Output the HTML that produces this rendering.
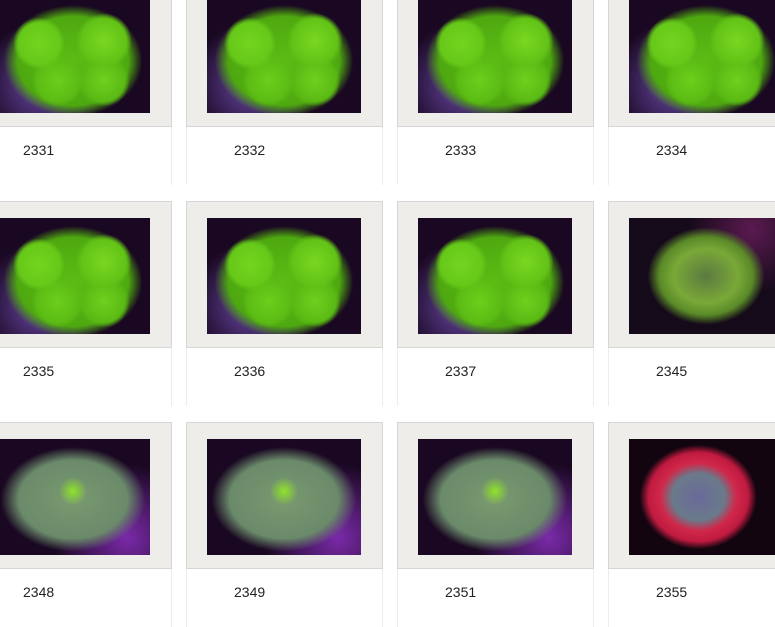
<!DOCTYPE html>
<html><head><style>
body{margin:0;width:775px;height:625px;overflow:hidden;background:#fff;position:relative;font-family:"Liberation Sans",sans-serif}
.c{position:absolute;width:197px;height:205px;box-sizing:border-box;border-left:1px solid #ececec;border-right:1px solid #ececec}
.g{position:absolute;left:-1px;top:0;width:197px;height:147px;background:#efedea;border:1px solid #d6d6d6;box-sizing:border-box}
.i{position:absolute;left:20px;top:16px;width:154px;height:116px;background:#1a0822}
.t{position:absolute;left:47px;top:162px;font-size:14px;color:#222}
.gr{background:radial-gradient(circle 26px at 28% 40%,#74d420 0,#66c818 80%,rgba(0,0,0,0) 100%),radial-gradient(circle 28px at 70% 38%,#7ad822 0,#62c216 80%,rgba(0,0,0,0) 100%),radial-gradient(circle 26px at 40% 72%,#6cce1c 0,#5cbc14 80%,rgba(0,0,0,0) 100%),radial-gradient(circle 26px at 70% 72%,#70d01e 0,#5aba14 80%,rgba(0,0,0,0) 100%),radial-gradient(ellipse 45% 48% at 50% 55%,#5cbc14 0,#4ea810 80%,rgba(0,0,0,0) 100%),radial-gradient(circle at 30% 75%,#6a4aa8 0,#1a0822 45%)}
.gs{background:radial-gradient(ellipse 38% 42% at 50% 50%,#5a7a40 0,#7aa838 55%,#5a8a28 80%,rgba(20,10,30,0) 100%),radial-gradient(circle at 80% 10%,#5a1a50 0,#150a1a 40%)}
.gg{background:radial-gradient(circle 14px at 50% 45%,#8ee22a 0,rgba(120,180,60,0) 100%),radial-gradient(ellipse 47% 45% at 50% 52%,#7a9a70 0,#6a8a6a 75%,rgba(30,10,40,0) 100%),radial-gradient(circle at 85% 85%,#7a2aa8 0,#1a0822 45%)}
.rd{background:radial-gradient(ellipse 38% 45% at 45% 50%,#6a6a9a 0,#6a7a8a 45%,#d0284a 65%,#c01a40 85%,rgba(20,5,20,0) 100%),#12050f}
</style></head><body>
<div class="c" style="left:-25px;top:-20px"><div class="g"><div class="i gr"></div></div><div class="t">2331</div></div>
<div class="c" style="left:186px;top:-20px"><div class="g"><div class="i gr"></div></div><div class="t">2332</div></div>
<div class="c" style="left:397px;top:-20px"><div class="g"><div class="i gr"></div></div><div class="t">2333</div></div>
<div class="c" style="left:608px;top:-20px"><div class="g"><div class="i gr"></div></div><div class="t">2334</div></div>
<div class="c" style="left:-25px;top:201px"><div class="g"><div class="i gr"></div></div><div class="t">2335</div></div>
<div class="c" style="left:186px;top:201px"><div class="g"><div class="i gr"></div></div><div class="t">2336</div></div>
<div class="c" style="left:397px;top:201px"><div class="g"><div class="i gr"></div></div><div class="t">2337</div></div>
<div class="c" style="left:608px;top:201px"><div class="g"><div class="i gs"></div></div><div class="t">2345</div></div>
<div class="c" style="left:-25px;top:422px"><div class="g"><div class="i gg"></div></div><div class="t">2348</div></div>
<div class="c" style="left:186px;top:422px"><div class="g"><div class="i gg"></div></div><div class="t">2349</div></div>
<div class="c" style="left:397px;top:422px"><div class="g"><div class="i gg"></div></div><div class="t">2351</div></div>
<div class="c" style="left:608px;top:422px"><div class="g"><div class="i rd"></div></div><div class="t">2355</div></div>
</body></html>
